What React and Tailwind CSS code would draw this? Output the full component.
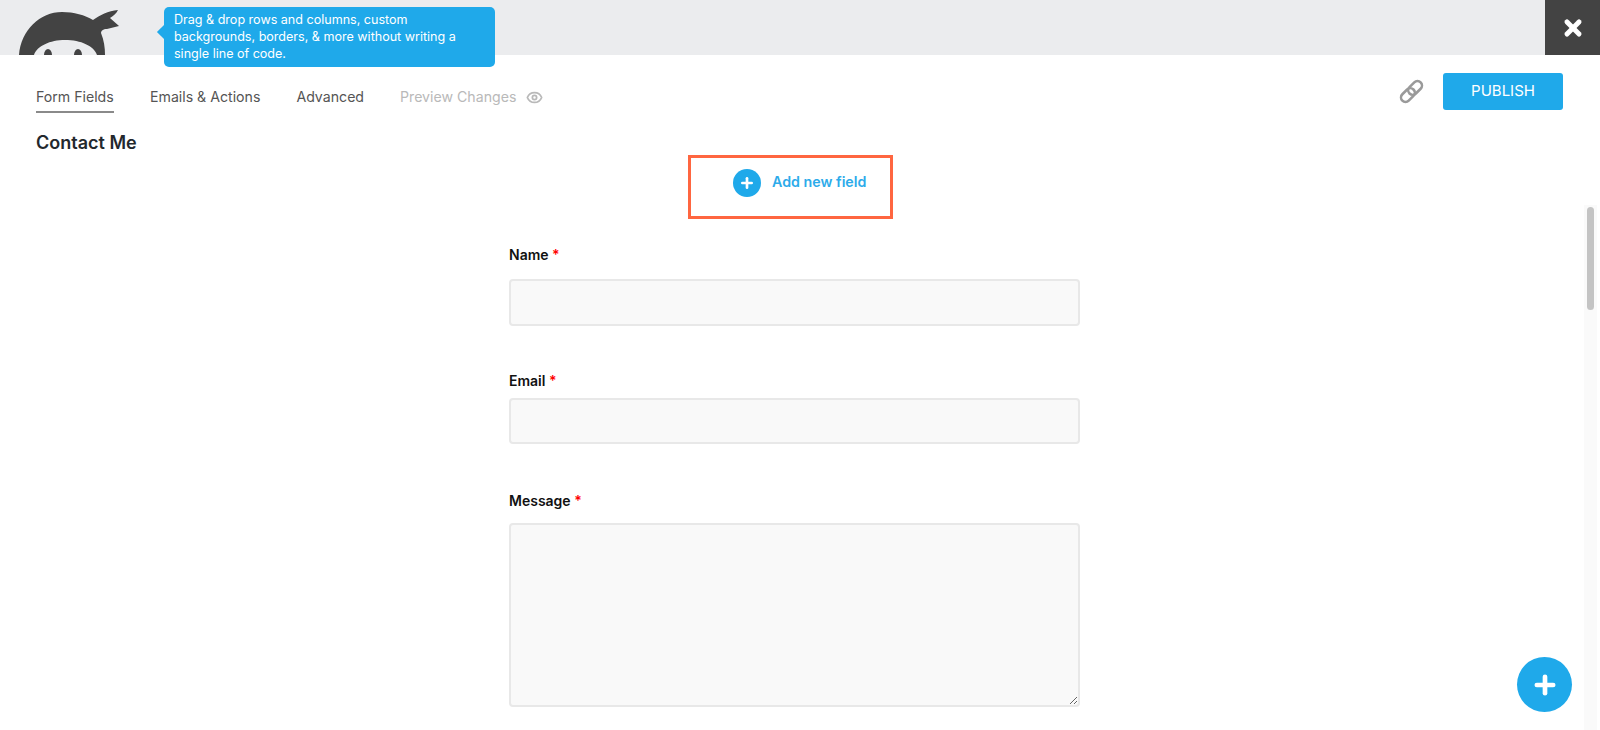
import React from 'react';
import { Eye, Plus, X } from 'lucide-react';

const tabs = [
  { label: 'Form Fields', className: 'w-[78px] border-b-2 border-[#8a8a8a] text-[#555]' },
  { label: 'Emails & Actions', className: 'text-[#555]' },
  { label: 'Advanced', className: 'text-[#555]' },
];

const NinjaLogo = () => (
  <svg viewBox="0 0 120 55" className="h-[55px] w-[120px]">
    <path d="M19 55C21 30 40 12 62 12C74 12 85 15 93 20C100 15 108 11 118 10C116 14 113 16 110 18L119 26C115 27 111 28 107 29C103 29 101 31 101 33C104 40 105 48 105 55H97C94 46 81 40 65 40C50 40 37 46 34 55Z" fill="#434343" />
    <path d="M44 55a4 6 0 0 1 8 0ZM74 55a4 6 0 0 1 8 0Z" fill="#434343" />
  </svg>
);

const ChainIcon = () => (
  <svg viewBox="0 0 24 24" className="h-[27px] w-[27px] text-[#9a9a9a]" fill="none" stroke="currentColor" strokeWidth="2.3">
    <g transform="rotate(-45 12 12)">
      <rect x="0.5" y="8" width="14" height="8" rx="4" />
      <rect x="9.5" y="8" width="14" height="8" rx="4" />
    </g>
  </svg>
);

const Field = ({ label, className, children }) => (
  <div className={className}>
    <label className="block text-[14px] leading-[20px] font-semibold text-[#111]">
      {label} <span className="text-[#f00]">*</span>
    </label>
    {children}
  </div>
);

const inputClass = 'block w-full bg-[#f9f9f9] border-2 border-[#e8e8e8] rounded-[4px]';

export default function App() {
  return (
    <div className="relative h-[730px] overflow-hidden bg-white font-['Inter',sans-serif]">
      {/* Top bar */}
      <header className="flex h-[55px] items-start justify-between bg-[#ebecee]">
        <NinjaLogo />
        <button className="flex h-[55px] w-[55px] items-center justify-center bg-[#434343]">
          <X className="h-[24px] w-[24px] text-white" strokeWidth={5} />
        </button>
      </header>

      {/* Tooltip */}
      <div className="absolute left-[164px] top-[7px] h-[60px] w-[331px] rounded-[5px] bg-[#1fa9ea] px-[10px] py-[4px] text-[12.55px] leading-[17px] text-white">
        <span className="absolute left-[-5px] top-[20px] h-[10px] w-[10px] rotate-45 bg-[#1fa9ea]" />
        <p className="relative w-[284px]">Drag &amp; drop rows and columns, custom backgrounds, borders, &amp; more without writing a single line of code.</p>
      </div>

      {/* Tabs */}
      <nav className="flex items-start justify-between pl-[36px] pr-[37px] pt-[18px]">
        <div className="flex items-start gap-[36px] pt-[14px] text-[14.15px] leading-[20px]">
          {tabs.map((tab) => (
            <a key={tab.label} className={`h-[26px] whitespace-nowrap ${tab.className}`}>{tab.label}</a>
          ))}
          <a className="flex items-center gap-[10px] text-[#b9b9b9]">
            Preview Changes
            <Eye className="h-[17px] w-[17px] text-[#b9b9b9]" strokeWidth={2.5} />
          </a>
        </div>
        <div className="flex items-center gap-[18px]">
          <ChainIcon />
          <button className="h-[37px] w-[120px] rounded-[3px] bg-[#1fa9ea] text-[15px] text-white">PUBLISH</button>
        </div>
      </nav>

      <h1 className="ml-[36px] mt-[18px] text-[18px] leading-[24px] font-semibold text-[#23282d]">Contact Me</h1>

      {/* Add field */}
      <div className="ml-[688px] flex h-[64px] w-[205px] items-center gap-[11px] border-[3px] border-[#ff6640] pb-[9px] pl-[42px]">
        <span className="flex h-[28px] w-[28px] items-center justify-center rounded-full bg-[#1fa9ea]">
          <Plus className="h-[16px] w-[16px] text-white" strokeWidth={4} />
        </span>
        <span className="mb-[2px] whitespace-nowrap text-[14.25px] font-semibold text-[#2dabea]">Add new field</span>
      </div>

      {/* Form */}
      <form className="ml-[509px] w-[571px]">
        <Field label="Name" className="mt-[26px]">
          <div className={`${inputClass} mt-[14px] h-[47px]`} />
        </Field>
        <Field label="Email" className="mt-[45px]">
          <div className={`${inputClass} mt-[7px] h-[46px]`} />
        </Field>
        <Field label="Message" className="mt-[47px]">
          <textarea className={`${inputClass} mt-[12px] h-[184px]`} />
        </Field>
      </form>

      {/* Scrollbar */}
      <div className="absolute bottom-0 right-[3px] top-[205px] w-[13px] bg-[#fafafa] px-[3px] pt-[2px]">
        <div className="h-[103px] rounded-full bg-[#c4c4c4]" />
      </div>

      <button className="absolute bottom-[18px] right-[28px] flex h-[55px] w-[55px] items-center justify-center rounded-full bg-[#1fa9ea]">
        <Plus className="h-[28px] w-[28px] text-white" strokeWidth={4} />
      </button>
    </div>
  );
}
